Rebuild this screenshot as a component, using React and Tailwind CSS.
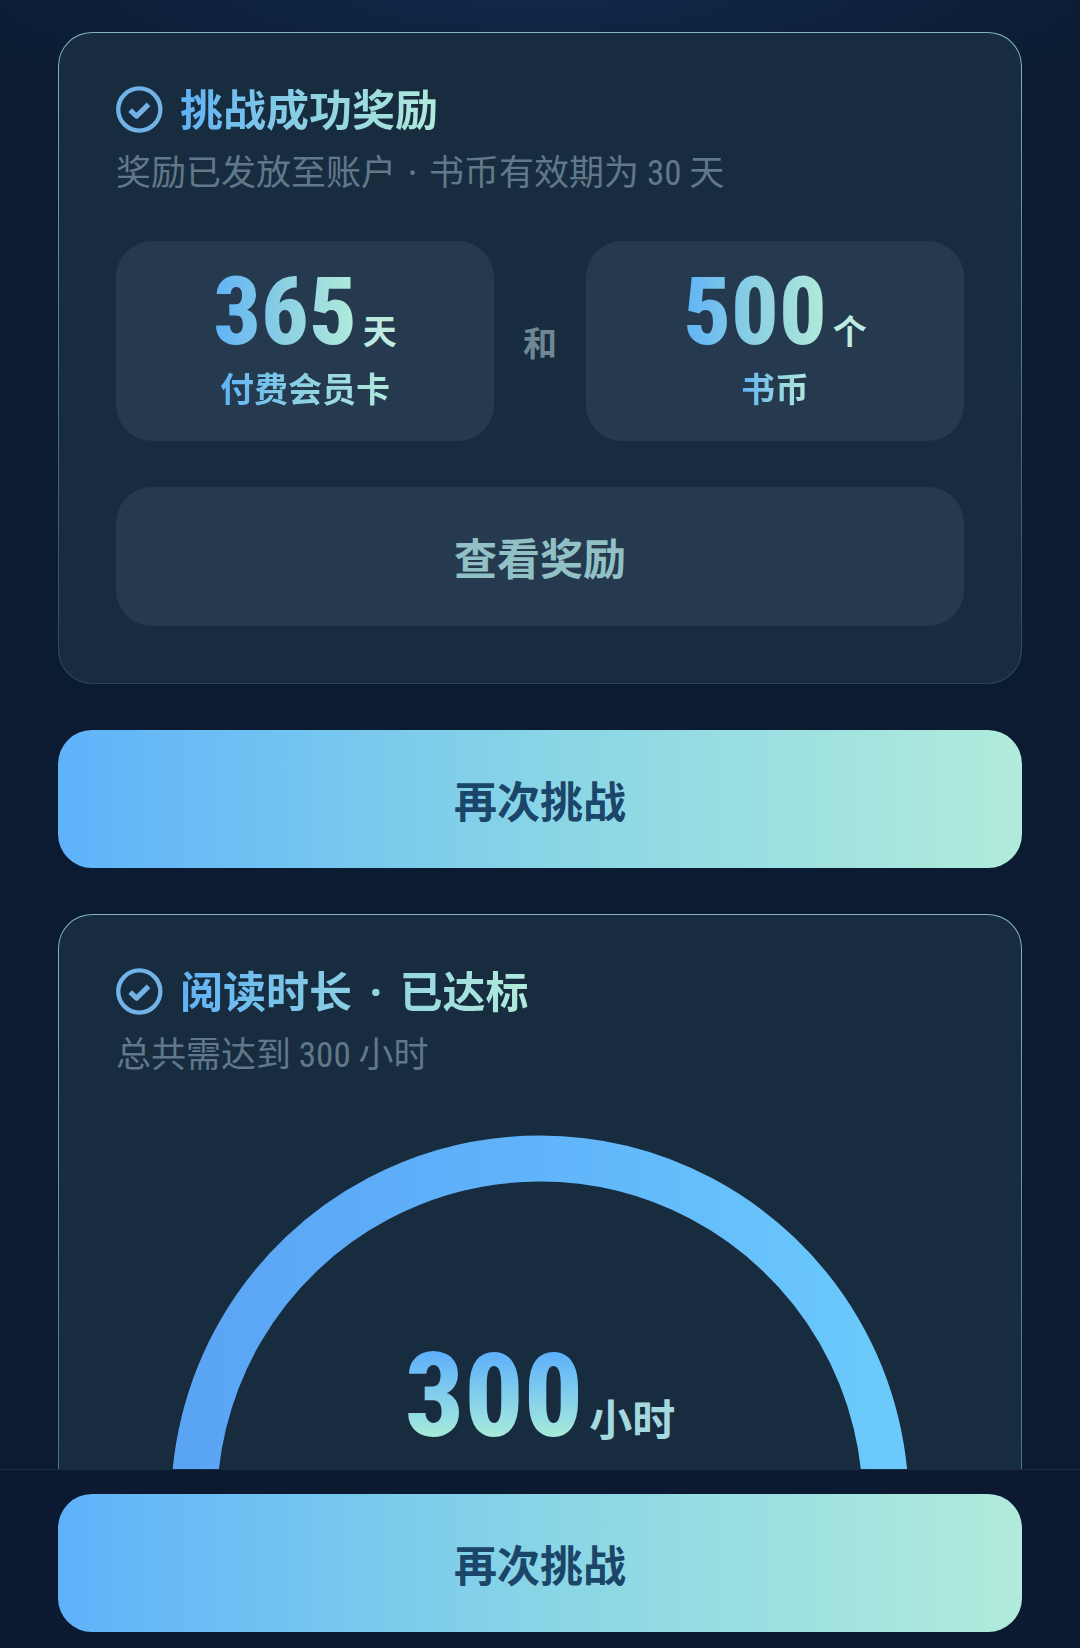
import React from "react";

const TITLE_GRADIENT =
  "bg-linear-to-r from-[#5fb2f6] via-[#8cd0e2] to-[#b2ebda] bg-clip-text text-transparent";

function CheckBadge({ id }) {
  return (
    <svg viewBox="0 0 48 48" className="size-[47px] shrink-0" fill="none" aria-hidden="true">
      <defs>
        <linearGradient id={id} x1="0" y1="0" x2="1" y2="1">
          <stop offset="0" stopColor="#6fb4ec" />
          <stop offset="1" stopColor="#74b2e4" />
        </linearGradient>
      </defs>
      <circle cx="23.8" cy="24" r="21.5" stroke={`url(#${id})`} strokeWidth="4.4" />
      <path d="M14.4 24.6 L21 30.8 L33.2 18.8" stroke="#74b2e6" strokeWidth="5.2" strokeLinejoin="round" />
    </svg>
  );
}

function Dot({ className }) {
  return <span className={`font-['Noto_Sans',sans-serif] leading-none ${className}`}>·</span>;
}

function Digits({ children }) {
  return <span className="font-['Roboto_Condensed',Roboto,sans-serif] leading-none">{children}</span>;
}

function Card({ children }) {
  return (
    <section className="rounded-[34px] border border-transparent bg-origin-border px-[57px] pt-12 pb-[57px] [background:linear-gradient(#182c40,#182c40)_padding-box,linear-gradient(to_bottom,#83b7bd,#5d8b95_35%,#2c4456)_border-box]">
      {children}
    </section>
  );
}

function CardHeader({ id, title, subtitle }) {
  return (
    <header>
      <div className="flex items-center gap-[17px]">
        <CheckBadge id={id} />
        <h2 className={`pb-1 text-[43px] leading-[52px] font-bold ${TITLE_GRADIENT}`}>{title}</h2>
      </div>
      <p className="mt-[5px] text-[35px] leading-[56px] text-[#60798a]">{subtitle}</p>
    </header>
  );
}

function Reward({ value, unit, label }) {
  return (
    <div className="flex h-[200px] flex-1 flex-col items-center rounded-[36px] bg-[#253a4e] pt-[21px]">
      <div className="flex items-baseline gap-1.5">
        <span className={`font-['Roboto_Condensed',Roboto,sans-serif] text-[94px] leading-[100px] font-extrabold ${TITLE_GRADIENT}`}>
          {value}
        </span>
        <span className="text-[34px] leading-10 font-bold text-[#bfeae2]">{unit}</span>
      </div>
      <span className={`mt-1 text-[34px] leading-[44px] font-bold ${TITLE_GRADIENT}`}>{label}</span>
    </div>
  );
}

function PrimaryButton({ children }) {
  return (
    <button
      type="button"
      className="h-[138px] w-full shrink-0 rounded-[34px] bg-linear-to-r from-[#5fb2fa] via-[#88d5e6] to-[#b1ebdb] text-[43px] font-bold text-[#1c456a]"
    >
      {children}
    </button>
  );
}

function Gauge({ value, unit }) {
  return (
    <div className="mx-auto mt-[55px] grid w-[87%] place-items-center">
      <svg viewBox="0 0 738 738" className="col-start-1 row-start-1 w-full" fill="none" aria-hidden="true">
        <defs>
          <linearGradient id="gauge-stroke" x1="0" y1="0" x2="1" y2="0">
            <stop offset="0" stopColor="#5aa4f4" />
            <stop offset="0.5" stopColor="#60b4fb" />
            <stop offset="1" stopColor="#6bcafb" />
          </linearGradient>
        </defs>
        <path d="M69 542 A346 346 0 1 1 669 542" stroke="url(#gauge-stroke)" strokeWidth="46" strokeLinecap="round" />
      </svg>
      <div className="col-start-1 row-start-1 flex items-baseline gap-1.5 pb-[216px]">
        <span className="bg-linear-to-b from-[#5fb0fa] from-20% to-[#a8ecd8] to-80% bg-clip-text font-['Roboto_Condensed',Roboto,sans-serif] text-[117px] leading-[140px] font-extrabold text-transparent">
          {value}
        </span>
        <span className="text-[43px] leading-[50px] font-bold text-[#a5d9df]">{unit}</span>
      </div>
    </div>
  );
}

export default function App() {
  return (
    <div className="flex h-screen flex-col bg-[#0b1c32] bg-[radial-gradient(ellipse_60%_100px_at_50%_0,#11284a,transparent)] font-['Noto_Sans_CJK_SC',sans-serif]">
      <main className="flex min-h-0 flex-1 flex-col gap-[46px] overflow-y-auto px-[58px] pt-8 [scrollbar-width:none]">
        <Card>
          <CardHeader
            id="badge-reward"
            title="挑战成功奖励"
            subtitle={<>奖励已发放至账户 <Dot className="mx-1" /> 书币有效期为 <Digits>30</Digits> 天</>}
          />
          <div className="mt-[43px] flex items-center">
            <Reward value="365" unit="天" label="付费会员卡" />
            <span className="w-[92px] text-center text-[34px] font-bold text-[#6e8893]">和</span>
            <Reward value="500" unit="个" label="书币" />
          </div>
          <button
            type="button"
            className="mt-[46px] h-[139px] w-full rounded-[36px] bg-[#253a4e] text-[43px] font-bold text-[#91c0c5]"
          >
            查看奖励
          </button>
        </Card>
        <PrimaryButton>再次挑战</PrimaryButton>
        <Card>
          <CardHeader
            id="badge-reading"
            title={<>阅读时长 <Dot className="mx-2" /> 已达标</>}
            subtitle={<>总共需达到 <Digits>300</Digits> 小时</>}
          />
          <Gauge value="300" unit="小时" />
        </Card>
      </main>
      <footer className="shrink-0 border-t border-[#1a2c40] bg-[#0b1a31] px-[58px] pt-6 pb-4">
        <PrimaryButton>再次挑战</PrimaryButton>
      </footer>
    </div>
  );
}
